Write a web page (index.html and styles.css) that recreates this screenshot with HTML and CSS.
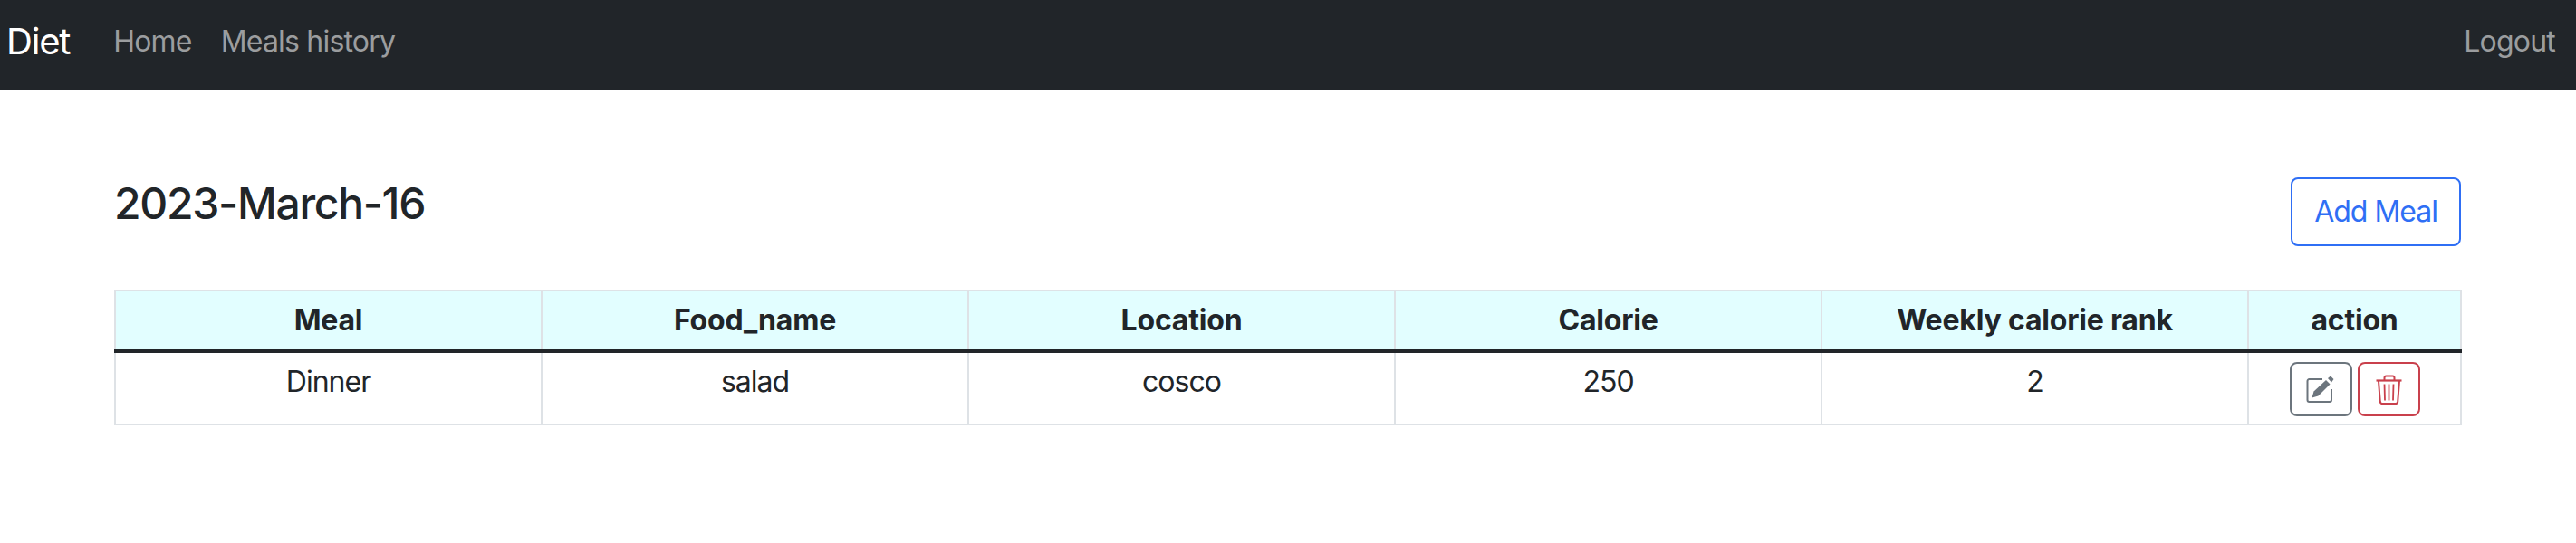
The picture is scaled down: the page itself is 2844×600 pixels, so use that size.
FILE: index.html
```html
<!DOCTYPE html>
<html lang="en">
<head>
    <meta charset="UTF-8">
    <meta name="viewport" content="width=device-width, initial-scale=1.0">
    <title>Diet</title>
    <link rel="stylesheet" href="styles.css">
</head>
<body>

    <nav class="navbar">
        <a class="brand" href="#">Diet</a>
        <a class="nav-link" href="#">Home</a>
        <a class="nav-link" href="#">Meals history</a>
        <a class="nav-link logout" href="#">Logout</a>
    </nav>

    <main class="content">
        <div class="title-row">
            <h4>2023-March-16</h4>
            <button class="btn btn-add">Add Meal</button>
        </div>

        <table>
            <thead>
                <tr>
                    <th>Meal</th>
                    <th>Food_name</th>
                    <th>Location</th>
                    <th>Calorie</th>
                    <th>Weekly calorie rank</th>
                    <th class="action-col">action</th>
                </tr>
            </thead>
            <tbody>
                <tr>
                    <td>Dinner</td>
                    <td>salad</td>
                    <td>cosco</td>
                    <td>250</td>
                    <td>2</td>
                    <td>
                        <div class="actions">
                            <button class="btn btn-icon btn-edit" aria-label="Edit">
                                <svg viewBox="0 0 36 36" width="36" height="36">
                                    <path d="M30 18V30a2 2 0 0 1-2 2H5.500a2 2 0 0 1-2-2V9a2 2 0 0 1 2-2H20" fill="none" stroke="currentColor" stroke-width="2"/>
                                    <path d="M8.500 27.500L10.500 20.500 24 8 28.500 12.500 15.500 25.500z" fill="currentColor"/>
                                    <path d="M26 6L29 3.500 32.500 7 30 10.500z" fill="currentColor"/>
                                </svg>
                            </button>
                            <button class="btn btn-icon btn-delete" aria-label="Delete">
                                <svg viewBox="0 0 36 36" width="36" height="36">
                                    <path d="M4.500 8.500h28" fill="none" stroke="currentColor" stroke-width="2.200"/>
                                    <path d="M13.500 8V5.500a2 2 0 0 1 2-2h7a2 2 0 0 1 2 2V8" fill="none" stroke="currentColor" stroke-width="2"/>
                                    <path d="M7 9l1.800 23a2.500 2.500 0 0 0 2.500 2h14.400a2.500 2.500 0 0 0 2.500-2L30 9" fill="none" stroke="currentColor" stroke-width="2"/>
                                    <path d="M13.500 12.500l.5 18M18.500 12.500v18M23.500 12.500l-.5 18" fill="none" stroke="currentColor" stroke-width="1.800"/>
                                </svg>
                            </button>
                        </div>
                    </td>
                </tr>
            </tbody>
        </table>
    </main>

</body>
</html>
```

FILE: styles.css
```css
body {
    font-family: Inter, 'Liberation Sans', sans-serif;
    font-size: 32px;
    line-height: 1.5;
    letter-spacing: -0.8px;
    margin: 0;
    padding: 0;
    background-color: #ffffff;
    color: #212529;
}

a {
    text-decoration: none;
}

.navbar {
    display: flex;
    align-items: center;
    gap: 32px;
    height: 100px;
    padding: 0 23px 8px 7px;
    box-sizing: border-box;
    background-color: #212529;
}

.brand {
    font-size: 40px;
    letter-spacing: -1.2px;
    color: #ffffff;
    margin-right: 16px;
}

.nav-link {
    color: #9b9d9f;
}

.logout {
    margin-left: auto;
}

.content {
    padding: 96px 127px 0 126px;
}

.title-row {
    display: flex;
    justify-content: space-between;
    align-items: flex-start;
    margin-bottom: 48px;
}

h4 {
    font-size: 48px;
    font-weight: 500;
    line-height: 1.2;
    letter-spacing: -1.3px;
    margin: 0;
}

.btn {
    font-family: inherit;
    font-size: 32px;
    line-height: 48px;
    letter-spacing: -1px;
    background-color: #ffffff;
    border-radius: 8px;
    cursor: pointer;
}

.btn-add {
    color: #2f6ff5;
    border: 2px solid #2f6ff5;
    padding: 12px 24px;
}

table {
    width: 100%;
    table-layout: fixed;
    border-collapse: collapse;
    text-align: center;
}

th, td {
    box-sizing: border-box;
    border: 2px solid #dee2e6;
    padding: 8px;
}

th {
    width: 471px;
    letter-spacing: -0.2px;
    background-color: #e2feff;
    border-bottom: 4px solid #212529;
}

.action-col {
    width: 235px;
}

td {
    vertical-align: top;
    letter-spacing: -1px;
}

.actions {
    display: flex;
    justify-content: center;
    gap: 6px;
    padding-top: 2px;
}

.btn-icon {
    display: flex;
    align-items: center;
    justify-content: center;
    width: 69px;
    height: 60px;
    padding: 0;
}

.btn-edit {
    color: #6c757d;
    border: 2px solid #6c757d;
}

.btn-delete {
    color: #c9404c;
    border: 2px solid #c9404c;
}
```
